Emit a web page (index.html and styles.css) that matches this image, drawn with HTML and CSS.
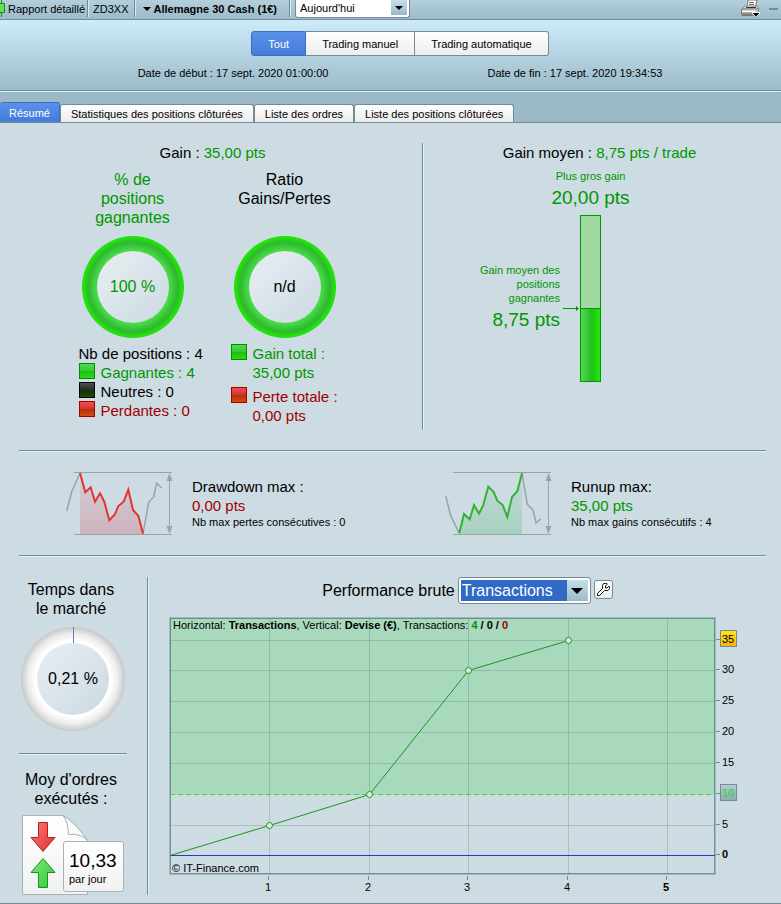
FILE: index.html
```html
<!DOCTYPE html>
<html lang="fr">
<head>
    <meta charset="UTF-8">
    <meta name="viewport" content="width=device-width, initial-scale=1.0">
    <title>Rapport détaillé</title>
    <link rel="stylesheet" href="styles.css">
</head>
<body>
    <div class="topbar">
        <div class="topbar-item report">
            <svg width="5" height="17" viewBox="0 0 5 17">
                <path d="M1.5 0v17" stroke="#109010"/>
                <path d="M-2 3.5h6.5v9h-6.500" fill="#5fe05f" stroke="#109010"/>
            </svg>
            <span>Rapport détaillé</span>
        </div>
        <div class="topbar-item">ZD3XX</div>
        <button class="topbar-item instrument" type="button">
            <svg width="8" height="4" viewBox="0 0 8 4"><path d="M0 0h8L4 4z" fill="#000"/></svg>
            Allemagne 30 Cash (1€)
        </button>
        <div class="select-box period">
            <select aria-label="Période">
                <option>Aujourd'hui</option>
            </select>
            <span class="select-arrow"><svg width="8" height="4" viewBox="0 0 8 4"><path d="M0 0h8L4 4z" fill="#000"/></svg></span>
        </div>
        <div class="window-tools">
            <button type="button" aria-label="Imprimer">
                <svg width="20" height="17" viewBox="0 0 20 17">
                    <defs>
                        <linearGradient id="metal" x1="0" x2="0" y1="0" y2="1">
                            <stop offset="0" stop-color="#eee"/>
                            <stop offset="1" stop-color="#6c6c6c"/>
                        </linearGradient>
                    </defs>
                    <path d="M6 8L7 0h9l-2 8z" fill="#fff" stroke="#777"/>
                    <path d="M8 2.500h5M8 4.500h5" stroke="#666"/>
                    <path d="M1 9l3-3h12l2 3z" fill="#ddd" stroke="#888"/>
                    <path d="M5 7.500h10" stroke="#333"/>
                    <rect x="0.5" y="9" width="17" height="6.500" rx="1" fill="url(#metal)" stroke="#777"/>
                    <path d="M1 11.500h13" stroke="#fff"/>
                    <path d="M11 12h8v2l-4 3-4-3z" fill="#fff"/>
                    <path d="M11.500 13h7L15 16.500z" fill="#000"/>
                </svg>
            </button>
            <button type="button" aria-label="Réduire">
                <svg width="9" height="2" viewBox="0 0 9 2"><path d="M0 1h9" stroke="#718c98" stroke-width="2"/></svg>
            </button>
        </div>
    </div>

    <header class="filters">
        <div class="segmented">
            <button class="active" type="button">Tout</button>
            <button type="button">Trading manuel</button>
            <button type="button">Trading automatique</button>
        </div>
        <div class="dates">
            <div>Date de début : <time>17 sept. 2020 01:00:00</time></div>
            <div>Date de fin : <time>17 sept. 2020 19:34:53</time></div>
        </div>
    </header>

    <nav class="tabs">
        <button class="active" type="button">Résumé</button>
        <button type="button">Statistiques des positions clôturées</button>
        <button type="button">Liste des ordres</button>
        <button type="button">Liste des positions clôturées</button>
    </nav>

    <main>
        <section class="overview">
            <div class="gain">
                <h2>Gain : <span class="green">35,00 pts</span></h2>
                <div class="ratios">
                    <div class="ratio">
                        <h3 class="green">% de<br>positions<br>gagnantes</h3>
                        <div class="donut win"><div class="donut-value green">100 %</div></div>
                        <div class="legend">
                            <div>Nb de positions : 4</div>
                            <div class="legend-row green"><i class="swatch swatch-green"></i>Gagnantes : 4</div>
                            <div class="legend-row"><i class="swatch swatch-black"></i>Neutres : 0</div>
                            <div class="legend-row red"><i class="swatch swatch-red"></i>Perdantes : 0</div>
                        </div>
                    </div>
                    <div class="ratio">
                        <h3>Ratio<br>Gains/Pertes</h3>
                        <div class="donut win"><div class="donut-value">n/d</div></div>
                        <div class="legend totals">
                            <div class="legend-row green"><i class="swatch swatch-green"></i><span>Gain total :<br>35,00 pts</span></div>
                            <div class="legend-row red"><i class="swatch swatch-red"></i><span>Perte totale :<br>0,00 pts</span></div>
                        </div>
                    </div>
                </div>
            </div>

            <div class="average">
                <h2>Gain moyen : <span class="green">8,75 pts / trade</span></h2>
                <div class="gauge-block green">
                    <div class="small">Plus gros gain</div>
                    <div class="big">20,00 pts</div>
                    <div class="gauge-row">
                        <div class="gauge-label">
                            <div>
                                <div class="small">Gain moyen des<br>positions<br>gagnantes</div>
                                <div class="big">8,75 pts</div>
                            </div>
                            <svg class="gauge-arrow" width="17" height="5" viewBox="0 0 17 5">
                                <path d="M0 2.500h14" stroke="#009600"/>
                                <path d="M13 0l3 2.500-3 2.500z" fill="#009600"/>
                            </svg>
                        </div>
                        <div class="gauge"><div class="gauge-fill" style="height: 44%"></div></div>
                    </div>
                </div>
            </div>
        </section>

        <section class="extremes">
            <div class="extreme">
                <svg width="107" height="64" viewBox="0 0 107 64">
                    <defs>
                        <linearGradient id="redFill" x1="0" x2="0" y1="0" y2="1">
                            <stop offset="0" stop-color="#d8323c" stop-opacity="0.06"/>
                            <stop offset="1" stop-color="#d8323c" stop-opacity="0.24"/>
                        </linearGradient>
                    </defs>
                    <path d="M14 1L19 20l5-5 5 15 5-9 4 9 5 18 6-6 3-8 6-4 4-12 5 20 5 6 5 18v1H14z" fill="url(#redFill)"/>
                    <g fill="none" stroke="#95a5ad">
                        <path d="M8 0.500h98M8 62.500h98M103.500 4v55"/>
                        <path d="M0.700 39l5-19.300L14 1.300M77 61.700l5.700-31.400 5-5.300 3-13.700 5 4.700" stroke-width="1.500"/>
                    </g>
                    <path d="M103.500 1l3 8h-6zM103.500 62l3-8h-6z" fill="#95a5ad"/>
                    <path d="M14 1L19.300 20.300l5.400-5L29 29.700l5-8.400 4.300 8.400 5 18.600 5.700-6 3.300-8.300 5.400-4.300 4.600-12L67 38l5.300 5.700 4.700 18" fill="none" stroke="#e63232" stroke-width="2"/>
                </svg>
                <div>
                    <div class="medium">Drawdown max :</div>
                    <div class="medium red">0,00 pts</div>
                    <div class="small">Nb max pertes consécutives : 0</div>
                </div>
            </div>
            <div class="extreme">
                <svg width="107" height="64" viewBox="0 0 107 64">
                    <defs>
                        <linearGradient id="greenFill" x1="0" x2="0" y1="0" y2="1">
                            <stop offset="0" stop-color="#32b450" stop-opacity="0.06"/>
                            <stop offset="1" stop-color="#32b450" stop-opacity="0.24"/>
                        </linearGradient>
                    </defs>
                    <path d="M14.300 61.300L19 42l5.700 5.300L29 33l5 8.700 4.300-8.700 5-18.300 5.400 5.300 3.600 8.700 5.400 4.300 4.600 12L67 25l5.300-5.700L77 1.300V62H14z" fill="url(#greenFill)"/>
                    <g fill="none" stroke="#95a5ad">
                        <path d="M8 0.500h98M8 62.500h98M103.500 4v55"/>
                        <path d="M0.700 23.700l5 20 8.600 17.600M77 1.300l5.300 31L88 38l3 13 4.700-4.300" stroke-width="1.500"/>
                    </g>
                    <path d="M103.500 1l3 8h-6zM103.500 62l3-8h-6z" fill="#95a5ad"/>
                    <path d="M14.300 61.300L19 42l5.700 5.300L29 33l5 8.700 4.300-8.700 5-18.300 5.400 5.300 3.600 8.700 5.400 4.300 4.600 12L67 25l5.300-5.700L77 1.300" fill="none" stroke="#32b432" stroke-width="2"/>
                </svg>
                <div>
                    <div class="medium">Runup max:</div>
                    <div class="medium green">35,00 pts</div>
                    <div class="small">Nb max gains consécutifs : 4</div>
                </div>
            </div>
        </section>

        <section class="performance">
            <aside>
                <h3>Temps dans<br>le marché</h3>
                <div class="donut market"><div class="donut-value">0,21 %</div></div>
                <div class="orders-block">
                    <h3>Moy d'ordres<br>exécutés :</h3>
                    <div class="orders">
                        <svg width="66" height="80" viewBox="0 0 66 80">
                            <defs>
                                <linearGradient id="paper" x1="0" x2="0" y1="0" y2="1">
                                    <stop offset="0" stop-color="#fff"/>
                                    <stop offset="1" stop-color="#f1f1f1"/>
                                </linearGradient>
                                <linearGradient id="down" x1="0" x2="1" y1="0" y2="1">
                                    <stop offset="0" stop-color="#ff7878"/>
                                    <stop offset="1" stop-color="#dc3232"/>
                                </linearGradient>
                                <linearGradient id="up" x1="0" x2="1" y1="0" y2="1">
                                    <stop offset="0" stop-color="#82e682"/>
                                    <stop offset="1" stop-color="#32c832"/>
                                </linearGradient>
                            </defs>
                            <path d="M0.500 0.500H41Q53 7 65.500 25.500v54H0.500z" fill="url(#paper)" stroke="#a5b2ba"/>
                            <path d="M41 0.500Q46 7 46.500 19.500 58 18 65.500 25.500 53 7 41 0.500z" fill="#fafafa" stroke="#a5b2ba"/>
                            <path d="M16.500 7.500h9v15h7.500L21 36.500 9 22.500h7.500z" fill="url(#down)" stroke="#b41e1e"/>
                            <path d="M21 43.500l12 14h-7.500v15h-9v-15H9z" fill="url(#up)" stroke="#149614"/>
                        </svg>
                        <div class="orders-card">
                            <div class="orders-value">10,33</div>
                            <div class="small">par jour</div>
                        </div>
                    </div>
                </div>
            </aside>

            <div class="chart-panel">
                <div class="chart-head">
                    <label for="unit">Performance brute</label>
                    <div class="select-box unit">
                        <select id="unit">
                            <option>Transactions</option>
                        </select>
                        <span class="select-arrow"><svg width="12" height="6" viewBox="0 0 12 6"><path d="M0 0h12L6 6z" fill="#000"/></svg></span>
                    </div>
                    <button class="settings" type="button" aria-label="Réglages">
                        <svg width="15" height="15" viewBox="0 0 15 15">
                            <path d="M9.500 1.500H7.500L6.500 3.500V6.500L1.500 11.500V13.500H3.500L8.500 8.500H12L13.500 6.500V4.500H12.500L11 6H9.500V4L11 2.500V1.500z" fill="#fff" stroke="#111"/>
                        </svg>
                    </button>
                </div>

                <svg class="chart" viewBox="0 0 597 278">
                    <defs>
                        <linearGradient id="gold" x1="0" x2="0" y1="0" y2="1">
                            <stop offset="0" stop-color="#ffe61e"/>
                            <stop offset="1" stop-color="#f5b400"/>
                        </linearGradient>
                        <linearGradient id="steel" x1="0" x2="0" y1="0" y2="1">
                            <stop offset="0" stop-color="#b4ccd8"/>
                            <stop offset="1" stop-color="#8caab6"/>
                        </linearGradient>
                    </defs>
                    <rect x="1" y="1" width="545" height="177" fill="#a9d9bc"/>
                    <g class="grid">
                        <path d="M100.500 1v256M200.500 1v256M299.500 1v256M399.500 1v256M498.500 1v256"/>
                        <path d="M1 23.500h545M1 53.500h545M1 84.500h545M1 115.500h545M1 146.500h545M1 208.500h545"/>
                    </g>
                    <rect class="frame-outer" x="0.500" y="0.500" width="546" height="257"/>
                    <rect class="frame-inner" x="1.500" y="1.500" width="544" height="255"/>
                    <path class="threshold" d="M1 177.500h545"/>
                    <path class="zero" d="M1 238.500h545"/>
                    <polyline class="curve" points="1,238.500 100.500,208.500 200.500,177.500 299.500,53.500 399.500,23.500"/>
                    <g class="points">
                        <circle cx="100.500" cy="208.500" r="3"/>
                        <circle cx="200.500" cy="177.500" r="3"/>
                        <circle cx="299.500" cy="53.500" r="3"/>
                        <circle cx="399.500" cy="23.500" r="3"/>
                    </g>
                    <text x="4" y="12">Horizontal: <tspan class="bold">Transactions</tspan>, Vertical: <tspan class="bold">Devise (€)</tspan>, Transactions: <tspan class="bold fill-green">4</tspan><tspan class="bold"> / 0 / </tspan><tspan class="bold fill-red">0</tspan></text>
                    <text x="3" y="255">© IT-Finance.com</text>

                    <path class="ticks" d="M547 22.500h4M547 52.500h4M547 83.500h4M547 114.500h4M547 145.500h4M547 176.500h4M547 207.500h4M547 237.500h4"/>
                    <path class="ticks" d="M99.500 259v4M199.500 259v4M298.500 259v4M398.500 259v4M497.500 259v4"/>
                    <rect x="551.500" y="13.500" width="16" height="16" fill="url(#gold)" stroke="#718c98"/>
                    <rect x="551.500" y="167.500" width="16" height="16" fill="url(#steel)" stroke="#718c98"/>
                    <g>
                        <text x="553" y="26">35</text>
                        <text x="553" y="56">30</text>
                        <text x="553" y="87">25</text>
                        <text x="553" y="118">20</text>
                        <text x="553" y="149">15</text>
                        <text class="fill-lime" x="553" y="180">10</text>
                        <text x="553" y="211">5</text>
                        <text class="bold" x="553" y="241">0</text>
                    </g>
                    <g text-anchor="middle">
                        <text x="99" y="274">1</text>
                        <text x="199" y="274">2</text>
                        <text x="298" y="274">3</text>
                        <text x="398" y="274">4</text>
                        <text class="bold" x="497" y="274">5</text>
                    </g>
                </svg>
            </div>
        </section>
    </main>
</body>
</html>
```
FILE: styles.css
```css
* {
    box-sizing: border-box;
}
body {
    margin: 0;
    font-family: "Liberation Sans", Arial, sans-serif;
    font-size: 11px;
    color: #000;
    background-color: #cddbe3;
}
button, select {
    font: inherit;
    color: inherit;
    margin: 0;
    padding: 0;
    border: none;
    background: none;
    appearance: none;
}
svg {
    display: block;
    flex-shrink: 0;
}
h2, h3 {
    margin: 0;
    font-weight: normal;
    text-align: center;
    line-height: 19px;
}
h2 {
    font-size: 15px;
}
h3 {
    font-size: 16px;
}
.green {
    color: #009600;
}
.red {
    color: #a00000;
}
.small {
    font-size: 11px;
    line-height: 14px;
}
.medium {
    font-size: 15px;
    line-height: 19px;
}
.big {
    font-size: 19px;
    line-height: 24px;
}

/* Top bar */
.topbar {
    display: flex;
    align-items: flex-start;
    height: 20px;
    background: linear-gradient(#b2cfdb, #9dbbc8);
    border-bottom: 1px solid #718c98;
}
.topbar-item {
    display: flex;
    align-items: center;
    gap: 3px;
    height: 17px;
    padding: 0 5px;
    border-right: 1px solid #718c98;
    box-shadow: 1px 0 0 #d8ebf4;
    white-space: nowrap;
}
.report {
    padding: 0 2px 0 0;
}
.instrument {
    font-weight: bold;
    padding: 0 12px 0 8px;
}
.select-box {
    position: relative;
    background-color: #fff;
    border: 1px solid #718c98;
    border-radius: 3px;
    padding: 2px;
}
.select-box select {
    display: block;
    width: 100%;
}
.select-arrow {
    position: absolute;
    top: 2px;
    right: 2px;
    bottom: 2px;
    display: flex;
    align-items: center;
    justify-content: center;
    background: linear-gradient(#c4e0ec, #9cbac6);
    pointer-events: none;
}
.period {
    width: 115px;
    margin-left: 5px;
    padding-top: 0;
    border-top: none;
    border-radius: 0 0 3px 3px;
}
.period select {
    height: 15px;
    padding-left: 2px;
}
.period .select-arrow {
    top: 0;
    width: 16px;
}
.window-tools {
    display: flex;
    align-items: center;
    gap: 8px;
    margin-left: auto;
    padding-right: 3px;
}

/* Filters */
.filters {
    display: flex;
    flex-direction: column;
    align-items: center;
    gap: 10px;
    height: 71px;
    padding: 11px 0 0 19px;
    background: linear-gradient(#cdebf9, #9cbac7);
    border-bottom: 1px solid #718c98;
}
.segmented {
    display: flex;
}
.segmented button {
    height: 25px;
    padding: 0 16px;
    border: 1px solid #718c98;
    border-left: none;
    background: linear-gradient(#fff, #ededed);
}
.segmented .active {
    color: #fff;
    border: 1px solid #3c6ec8;
    border-radius: 3px 0 0 3px;
    background: linear-gradient(#5a91eb, #447bd6);
}
.segmented button:last-child {
    border-radius: 0 3px 3px 0;
}
.dates {
    display: flex;
    gap: 159px;
    line-height: 14px;
}

/* Tabs */
.tabs {
    display: flex;
    align-items: flex-end;
    height: 32px;
    background-color: #9cb9c6;
    border-top: 1px solid #d8ebf4;
    border-bottom: 1px solid #718c98;
}
.tabs button {
    height: 18px;
    padding: 0 10px;
    border: 1px solid #718c98;
    border-bottom: none;
    border-radius: 3px 3px 0 0;
    background: linear-gradient(#fff, #ebebeb);
    white-space: nowrap;
}
.tabs .active {
    height: 20px;
    padding: 0 9px;
    color: #fff;
    border-color: #3c6ec8;
    border-left: none;
    background: linear-gradient(#5a91eb, #447bd6);
}

/* Sections */
main {
    padding: 0 15px 0 19px;
    border-bottom: 1px solid #718c98;
}
.overview, .extremes {
    border-bottom: 1px solid #718c98;
    box-shadow: 0 1px 0 #e2f2fa;
}
.overview {
    display: grid;
    grid-template-columns: 404fr 343fr;
    padding: 20px 0;
}
.gain {
    height: 287px;
    padding-right: 24px;
    border-right: 1px solid #718c98;
    box-shadow: 1px 0 0 #e2f2fa;
}
.gain h2 {
    padding-left: 8px;
}
.ratios {
    display: flex;
    justify-content: center;
    gap: 44px;
    margin-top: 8px;
}
.ratio {
    width: 108px;
}
.ratio h3 {
    height: 57px;
}
.donut {
    display: flex;
    align-items: center;
    justify-content: center;
    width: 102px;
    height: 102px;
    margin: 9px auto 0;
    border-radius: 50%;
}
.win {
    background: radial-gradient(circle, #4bdc4b 36px, #2db92d 45px, #22e10c 49px, #22e10c 51px);
}
.donut-value {
    width: 72px;
    height: 72px;
    border-radius: 50%;
    background: linear-gradient(135deg, #e9eff3, #cbd9e2);
    font-size: 16px;
    line-height: 72px;
    text-align: center;
}
.legend {
    margin-top: 6px;
    font-size: 15px;
    line-height: 19px;
    white-space: nowrap;
}
.totals {
    display: flex;
    flex-direction: column;
    gap: 5px;
}
.legend-row {
    display: flex;
    gap: 6px;
}
.swatch {
    flex-shrink: 0;
    width: 16px;
    height: 16px;
    border: 1px solid;
}
.swatch-green {
    border-color: #008c00;
    background: linear-gradient(#50dc50, #32c832 50%, #1ebe0f 50%, #28dc14);
}
.swatch-black {
    border-color: #000;
    background: linear-gradient(#505050, #282828 50%, #143205 50%, #1e460a);
}
.swatch-red {
    border-color: #a00000;
    background: linear-gradient(#f05050, #d23232 50%, #b92d0a 50%, #cd500f);
}

/* Average gain */
.average h2 {
    padding-left: 10px;
}
.gauge-block {
    margin-top: 7px;
    padding-right: 8px;
    text-align: center;
}
.gauge-block > .big {
    margin: 3px 0 5px;
}
.gauge-row {
    display: grid;
    grid-template-columns: 1fr 21px 1fr;
    height: 167px;
}
.gauge-label {
    display: flex;
    justify-content: flex-end;
    gap: 3px;
    padding-top: 48px;
    text-align: right;
}
.gauge-label .big {
    margin-top: 3px;
}
.gauge-arrow {
    margin-top: 43px;
}
.gauge {
    display: flex;
    align-items: flex-end;
    border: 1px solid #009600;
    background-color: #a0daa0;
}
.gauge-fill {
    width: 100%;
    border-top: 1px solid #009600;
    background: linear-gradient(to right, #50dc50, #2dbe2d 50%, #1ebe0f 50%, #23e60f);
}

/* Drawdown and runup */
.extremes {
    display: grid;
    grid-template-columns: 379fr 321fr;
    padding: 21px 0 19px 47px;
}
.extreme {
    display: flex;
    gap: 19px;
    align-items: flex-start;
}
.extreme > div {
    padding-top: 5px;
}

/* Performance */
.performance {
    display: flex;
    padding: 21px 0 8px;
}
aside {
    width: 129px;
    padding: 3px 20px 0 0;
    border-right: 1px solid #718c98;
    box-shadow: 1px 0 0 #e2f2fa;
    flex-shrink: 0;
}
aside h3 {
    padding-right: 4px;
}
.market {
    width: 104px;
    height: 104px;
    background:
        linear-gradient(#5a82b4, #5a82b4) center top / 1px 17px no-repeat,
        radial-gradient(circle, #fff 38px, #ececec 45px, #c8c8c8 52px);
}
.orders-block {
    margin-top: 22px;
    padding-top: 16px;
    border-top: 1px solid #718c98;
    box-shadow: inset 0 1px 0 #e2f2fa;
}
.orders {
    position: relative;
    margin: 7px 0 0 3px;
}
.orders-card {
    position: absolute;
    left: 41px;
    bottom: 3px;
    width: 61px;
    padding: 8px 0 5px 5px;
    border: 1px solid #a5b2ba;
    border-radius: 3px;
    background: linear-gradient(#fff, #f1f1f1);
}
.orders-value {
    font-size: 19px;
    line-height: 22px;
}
.chart-panel {
    flex: 1;
    min-width: 0;
    padding-left: 21px;
}
.chart-head {
    display: flex;
    justify-content: center;
    gap: 3px;
    margin-bottom: 13px;
    font-size: 16px;
    line-height: 27px;
}
.unit {
    width: 133px;
    height: 27px;
}
.unit select {
    height: 21px;
    padding-left: 1px;
    line-height: 21px;
    color: #fff;
    background-color: #3069c6;
}
.unit .select-arrow {
    width: 21px;
}
.settings {
    display: flex;
    align-items: center;
    justify-content: center;
    width: 19px;
    height: 19px;
    margin-top: 3px;
    border: 1px solid #718c98;
    border-radius: 3px;
    background: linear-gradient(#fff, #ebebeb);
}

/* Chart */
.chart {
    width: 100%;
    height: auto;
    font-size: 11px;
}
.grid {
    stroke: #28503c;
    stroke-opacity: 0.2;
}
.frame-outer {
    fill: none;
    stroke: #9cb9c6;
}
.frame-inner {
    fill: none;
    stroke: #3c6464;
    stroke-opacity: 0.6;
}
.threshold {
    stroke: #46d246;
    stroke-dasharray: 5 3;
}
.zero {
    stroke: #3232d2;
}
.curve {
    fill: none;
    stroke: #199619;
}
.points {
    fill: #dcebe6;
    stroke: #199619;
}
.ticks {
    stroke: #718c98;
}
.bold {
    font-weight: bold;
}
.fill-green {
    fill: #009600;
}
.fill-red {
    fill: #a00000;
}
.fill-lime {
    fill: #46d246;
    font-weight: bold;
}
```
